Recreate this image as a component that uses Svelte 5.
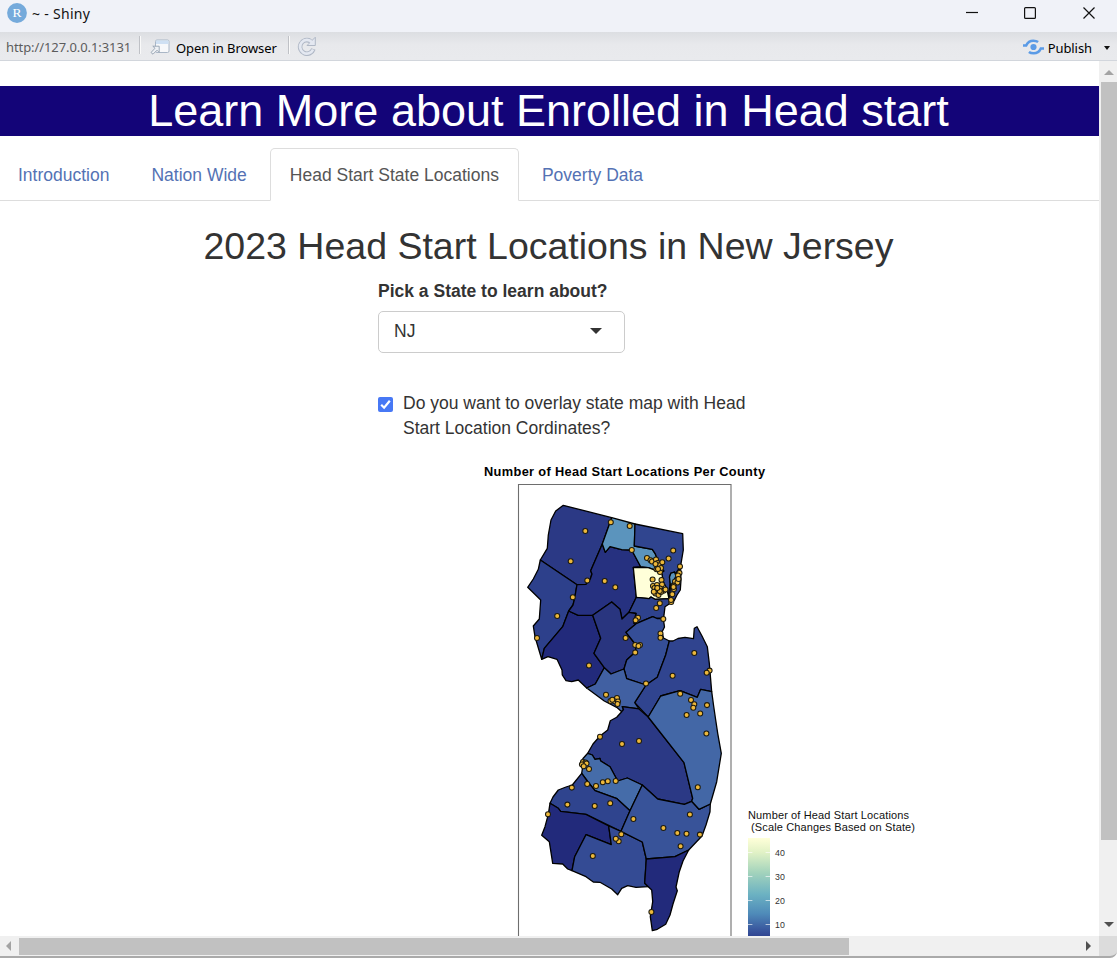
<script>
  const tabs = ['Introduction', 'Nation Wide', 'Head Start State Locations', 'Poverty Data'];
  let active = $state(2);
  let overlay = $state(true);

  const counties = [
    { name: 'Sussex', fill: '#2b3985', d: '540.3,560 547.3,548.3 548.3,535 551,520 555.7,511 563.3,505.3 611.7,517.7 602.3,544 590.7,570.7 592,574 590.3,579 586,584.3 577,584.7' },
    { name: 'Warren', fill: '#2d408b', d: '540.3,560 538.3,569.3 533.3,579 527.7,587.3 540.7,600 539.3,619 533.3,626 535,636.7 541.7,659.3 544.3,648.3 562.7,626.7 568.7,611 573,605 574.5,599 577,584.7' },
    { name: 'Hunterdon', fill: '#222a7b', d: '568.7,611 578.3,615.3 592.7,615.3 600.7,638.3 594,653.3 604.3,667.7 595.3,684 586.7,688 578.3,680 571.7,681.7 566,680.7 562.3,675 562,670 557,659.3 548,656.7 541.7,659.3 544.3,648.3 562.7,626.7' },
    { name: 'Morris', fill: '#263180', d: '602.3,544 605.3,552.3 610,546.7 621.7,549.7 631.7,550 640.7,566.7 633.3,567.3 636.3,597.3 629,612.3 622,619 620,609.3 611.7,602 592.7,615.3 578.3,615.3 568.7,611 573,605 574.5,599 577,584.7 586,584.3 590.3,579 592,574 590.7,570.7' },
    { name: 'Passaic', fill: '#5b94bd', d: '611.7,517.7 635,524 634.3,546 652.3,549.3 655,553.3 659,563 664,571 661.7,572.7 648.3,567.7 640.7,566.7 631.7,550 621.7,549.7 610,546.7 605.3,552.3 602.3,544' },
    { name: 'Bergen', fill: '#30458f', d: '635,524 682.7,533.7 683.3,550 680.5,566.7 676,573 670,585 668,598 664,588 661.7,572.7 664,571 659,563 655,553.3 652.3,549.3 634.3,546' },
    { name: 'Essex', fill: '#ffffd9', d: '633.3,567.3 648.3,567.7 661.7,572.7 663.3,581.7 666.7,588.3 669,598.7 655,599.3 651,597 649,598.7 636.3,597.3' },
    { name: 'Hudson', fill: '#30458f', d: '680.5,566.7 681,580 680.3,590 677,595 674,601 671,602.7 669,598.7 670.5,587 669.5,577 671,573 674.5,572 676,576' },
    { name: 'Hudson West', fill: '#5b94bd', d: '670.5,586 669.5,577 671,573 674.5,572 676,576 673,582' },
    { name: 'Union', fill: '#2e428d', d: '636.3,597.3 649,598.7 651,597 655,599.3 669,598.7 671,602.7 665,606.7 664,615 663.3,618.3 657,618.5 652.7,616.7 636.7,623.3 633.5,623 636,613.5 629,612.3' },
    { name: 'Somerset', fill: '#29357f', d: '592.7,615.3 611.7,602 620,609.3 622,619 629,612.3 636,613.5 633.5,623 636.7,623.3 626,632.3 636,645 635.7,651.7 626.7,660 624,669 611,674 604.3,667.7 594,653.3 600.7,638.3' },
    { name: 'Middlesex', fill: '#354e97', d: '626,632.3 636.7,623.3 652.7,616.7 657,618.5 663.3,618.3 664.5,627 662,632 663.5,638 669.3,641 665.7,655 657.3,677.3 646,685 626.7,678.7 624,669 626.7,660 635.7,651.7 636,645' },
    { name: 'Monmouth', fill: '#30448f', d: '669.3,641 673,641 678,638.5 685,637.3 693.5,638.7 694.3,628.3 697,626.7 702,636 707.3,646.7 709.3,663.3 711.7,691.7 700.7,689.3 697.3,697.3 680,690.7 660.7,696 648.2,717 634.7,702.7 646,685 657.3,677.3 665.7,655' },
    { name: 'Mercer', fill: '#4160a2', d: '604.3,667.7 611,674 624,669 626.7,678.7 646,685 634.7,702.7 639,708.9 622.3,706.7 623.5,709.5 621.7,711.7 616.7,707.3 604.3,701 586.7,688 595.3,684' },
    { name: 'Burlington', fill: '#2b3985', d: '621.7,711.7 623.5,709.5 622.3,706.7 639,708.9 648.2,717 684,762.7 692.7,798.3 691.7,801.3 684.3,804.3 657.7,799 642.3,785 627.3,778 617.7,781 610,766.7 600.7,761 600,758.5 595,759.3 592.3,755 587.7,753.3 593,744 600,736 607.7,730 610.3,720.7 616.7,717.3' },
    { name: 'Camden', fill: '#456ca9', d: '587.7,753.3 592.3,755 595,759.3 600,758.5 600.7,761 610,766.7 617.7,781 627.3,778 642.3,785 630,810.7 617,798.7 595,790.7 588,782 581.7,773.3 582.5,768 579.5,764 583,758.5' },
    { name: 'Gloucester', fill: '#2f448e', d: '581.7,773.3 572.3,785 566,787 558.3,790 553,797 550,803.3 558.3,808.3 560.7,811.3 586,814.3 621,831.3 630,810.7 617,798.7 595,790.7 588,782' },
    { name: 'Salem', fill: '#222a7b', d: '550,803.3 548.3,814.3 545,826.7 541.7,835.3 549.3,841.7 552.7,863.3 562.7,864 567.7,869 572,870.7 574.7,856.7 586,834.7 611.3,844.7 608.7,826 586,814.3 560.7,811.3 558.3,808.3' },
    { name: 'Cumberland', fill: '#344b94', d: '572,870.7 586,876.7 593.3,882 600,882.3 611.7,889 617.7,894.7 621.7,888.3 627.7,885.7 636,887.3 648.3,886.7 644.7,883.3 646.3,859 642.3,842 621,831.3 608.7,826 611.3,844.7 586,834.7 574.7,856.7' },
    { name: 'Atlantic', fill: '#385399', d: '642.3,785 657.7,799 684.3,804.3 691.7,801.3 699,809.3 710.3,804 710,811.7 706,825 702,836 688.7,850 675,856.7 646.3,859 642.3,842 621,831.3 630,810.7' },
    { name: 'Ocean', fill: '#4367a6', d: '711.7,691.7 713.5,705 715.7,720 717.7,733.3 721.3,753.3 716.7,781.7 710.3,804 699,809.3 691.7,801.3 692.7,798.3 684,762.7 648.2,717 660.7,696 680,690.7 697.3,697.3 700.7,689.3' },
    { name: 'Cape May', fill: '#222a7b', d: '688.7,850 683,861 679.3,871.7 677.5,880 676,887 677.3,890.7 673,904 670,915 665.7,924.3 657.3,929.3 652.3,930.7 650.3,916.7 652.7,901.7 651.7,890 648.3,886.7 644.7,883.3 646.3,859 675,856.7' }
  ];

  const sites = [
    [585.3, 531], [570.7, 561.3], [610.8, 522.3], [629.7, 526], [587.3, 580.5], [604.7, 581], [615.3, 587.2], [572.8, 597.2],
    [557.2, 616], [537, 638], [589, 665.5], [631.8, 550], [673.2, 550.5], [668.6, 558.4], [647, 558], [650.5, 560.2], [652, 561.5],
    [656, 559.5], [657.5, 563], [660, 565], [662.3, 562.3], [655.5, 564], [656.5, 569.3], [660, 572], [661, 568], [658, 569],
    [680, 566.5], [679.5, 573], [678, 575.5], [675, 581.5], [677.5, 582.5], [673.7, 585.6], [678.5, 579], [674, 589], [672.3, 594.2], [671.2, 602],
    [652.6, 579.5], [661.5, 580], [662, 584.5], [653, 586], [657, 585], [654.5, 588], [660, 588.5], [663.5, 590.7], [656.5, 590.5],
    [655.5, 593.5], [658.5, 595], [661, 592], [665.5, 589.5], [653.8, 591.8], [659.8, 591], [657.3, 588], [671, 600], [673.5, 587],
    [659.8, 603.3], [656.2, 608], [638, 617.8], [635.6, 620.3], [663.3, 619], [625.6, 638], [660.5, 633.5], [660.5, 637.8],
    [635.2, 645], [640, 645], [638.5, 646], [635.2, 652.5], [694.3, 653], [672.6, 675.8], [709.6, 670.6], [706.7, 672.7],
    [646, 683.4], [680.2, 693.8], [691, 700], [694.3, 704.3], [693.3, 707.8], [707, 705.1], [686.6, 715], [700.2, 713.5],
    [606, 694.8], [617, 698], [610.5, 701], [615, 701.5], [618, 701.5], [617.5, 704], [612.3, 699.8], [600, 736.8],
    [622, 744], [639, 741], [706.4, 733.5], [697.8, 787.3], [583, 762], [585.5, 762.5], [582, 764.5], [586.5, 763.5], [583.7, 766.3],
    [589, 769], [587.2, 784], [571.8, 787.6], [596, 786], [602.8, 782.2], [607.8, 781.3], [615.7, 781], [567.4, 804.6],
    [594.7, 806], [610.2, 803.2], [548, 814.3], [633.4, 819], [621.3, 834.3], [618.7, 841.3], [615.8, 838.7], [592.8, 856],
    [663.4, 828], [689.9, 814.4], [677.3, 833], [686.5, 833.7], [699.9, 834.6], [680.6, 846.2], [651.4, 912]
  ];

  const ticks = [[40, 852.5], [30, 876.5], [20, 900.5], [10, 924.5]];
</script>

<div class="window">
  <header class="titlebar">
    <svg class="logo" width="20" height="20" viewBox="0 0 20 20">
      <circle cx="10" cy="10" r="9.9" fill="#75aadb" />
      <text x="10" y="14" text-anchor="middle" fill="#fff" font-family="Liberation Serif, serif" font-size="13.5">R</text>
    </svg>
    <span class="caption">~ - Shiny</span>
    <svg class="controls" width="140" height="28" viewBox="0 0 140 28" fill="none" stroke="#111" stroke-width="1.2">
      <path d="M6 12.5h12" />
      <rect x="64.6" y="7.6" width="10.8" height="10.8" rx="1" />
      <path d="M123.5 7.5l11 11M134.5 7.5l-11 11" />
    </svg>
  </header>

  <div class="toolbar">
    <span class="url">http://127.0.0.1:3131</span>
    <i class="sep"></i>
    <svg class="open" width="20" height="16" viewBox="0 0 20 16">
      <rect x="5.5" y="1" width="13.5" height="12.5" rx="1.5" fill="#f7f8fa" stroke="#a9b6c6" />
      <path d="M6 1.5h12.5v3.5H6z" fill="#cfe0f3" />
      <path d="M1 13.5L5 9.3 2.8 7.2H9.2V13.4L7 11.2 3 15.2z" fill="#eef1f5" stroke="#94a0b0" stroke-width=".9" />
    </svg>
    <span class="label">Open in Browser</span>
    <i class="sep two"></i>
    <svg class="reload" width="20" height="20" viewBox="0 0 20 20">
      <path d="M13.6 5.2A6.8 6.8 0 1 0 16.4 13" fill="none" stroke="#b0b8c6" stroke-width="4.6" />
      <path d="M18.3 1.2v8.3H10l3-3z" fill="#e4e8f1" stroke="#b0b8c6" />
      <path d="M15 6.3A6.8 6.8 0 1 0 16.1 13.5" fill="none" stroke="#e4e8f1" stroke-width="2.7" />
    </svg>
    <svg class="pub" width="21" height="16" viewBox="0 0 21 16" fill="none" stroke="#5b9be6" stroke-width="2.5">
      <circle cx="10.5" cy="8" r="3.1" fill="#5b9be6" stroke="none" />
      <path d="M0 6.4h3.2C4.7 3.2 7.2 1.7 10.3 1.7c2 0 3.5.4 4.8 1.4" />
      <path d="M21 9.6h-3.2c-1.5 3.2-4 4.7-7.1 4.7-2 0-3.5-.4-4.8-1.4" />
    </svg>
    <span class="label">Publish</span>
    <i class="drop"></i>
  </div>

  <div class="view">
    <main class="page">
      <h1>Learn More about Enrolled in Head start</h1>
      <nav>
        {#each tabs as tab, i}
          <button class:active={active === i} onclick={() => (active = i)}>{tab}</button>
        {/each}
      </nav>
      <h2>2023 Head Start Locations in New Jersey</h2>
      <section class="form">
        <div class="field">Pick a State to learn about?</div>
        <div class="select"><span>NJ</span><i></i></div>
        <label class="check">
          <input type="checkbox" bind:checked={overlay} />
          <span class="box" class:on={overlay}>
            <svg width="15" height="15" viewBox="0 0 15 15"><path d="M3.2 7.8l2.9 2.9 5.7-7" fill="none" stroke="#fff" stroke-width="2.2" /></svg>
          </span>
          <span class="question">Do you want to overlay state map with Head Start Location Cordinates?</span>
        </label>
      </section>
      <svg class="plot" width="560" height="486" viewBox="378 450 560 486">
        <defs>
          <linearGradient id="scale" x1="0" y1="838" x2="0" y2="946" gradientUnits="userSpaceOnUse">
            <stop offset="0" stop-color="#ffffd9" />
            <stop offset=".13" stop-color="#e2f2c6" />
            <stop offset=".32" stop-color="#a3d3bc" />
            <stop offset=".52" stop-color="#6cb2c2" />
            <stop offset=".7" stop-color="#4f8bb9" />
            <stop offset=".87" stop-color="#36509a" />
            <stop offset="1" stop-color="#222a7b" />
          </linearGradient>
        </defs>
        <text x="484" y="475.6" class="ptitle" textLength="281">Number of Head Start Locations Per County</text>
        <path d="M518.5 940V484.5H731V940" fill="none" stroke="#6e6e6e" stroke-width="1.1" />
        <g stroke="#000" stroke-width="1.3" stroke-linejoin="round">
          {#each counties as c (c.name)}
            <polygon points={c.d} fill={c.fill} />
          {/each}
        </g>
        {#if overlay}
          <g fill="#edb83b" stroke="#1c1a10" stroke-width="1.05">
            {#each sites as [x, y]}
              <circle cx={x} cy={y} r="2.5" />
            {/each}
          </g>
        {/if}
        <text x="748" y="819" class="ltitle" textLength="161">Number of Head Start Locations</text>
        <text x="751" y="831" class="ltitle" textLength="164">(Scale Changes Based on State)</text>
        <rect x="748" y="838" width="22" height="108" fill="url(#scale)" />
        {#each ticks as [n, y]}
          <path d="M748 {y}h4.4M765.6 {y}h4.4" stroke="#fff" stroke-opacity=".7" stroke-width=".9" />
          <text x="775" y={y + 3.4} class="tick" textLength="10">{n}</text>
        {/each}
      </svg>
    </main>
    <div class="vbar"><i class="up"></i><i class="thumb"></i><i class="down"></i></div>
    <div class="hbar"><i class="left"></i><i class="thumb"></i><i class="right"></i></div>
    <div class="corner"></div>
  </div>
</div>

<style>
  :global(body) { margin: 0; overflow: hidden; background: #f0f0f0; }
  .window { width: 1117px; height: 958px; display: flex; flex-direction: column; overflow: hidden; font-family: "Liberation Sans", Arial, sans-serif; color: #333; }
  .titlebar { height: 32px; flex: none; display: flex; background: #f0f2f8; box-sizing: border-box; padding: 3px 17px 0 7px; font-family: "Noto Sans", sans-serif; color: #111; }
  .caption { font-size: 14px; line-height: 21px; margin-left: 5px; letter-spacing: .3px; }
  .controls { margin: -3px 0 0 auto; }
  .toolbar { height: 29px; flex: none; box-sizing: border-box; border-bottom: 1px solid #d2d6dc; display: flex; align-items: center; background: linear-gradient(#dcdee2, #e8e9ec 45%, #e9eaed); font-family: "Noto Sans", sans-serif; font-size: 13px; color: #000; white-space: nowrap; padding-left: 6px; }
  .url { width: 133px; color: #5c5c5c; letter-spacing: -.08px; padding-top: 1px; }
  .sep { width: 1px; height: 18px; background: #bfc1c6; border-right: 1px solid #fafafa; margin-bottom: 2px; }
  .open { margin: 2px 6px 0 9px; }
  .label { letter-spacing: -.08px; padding-top: 3px; }
  .two { margin-left: 11px; }
  .reload { margin-left: 7px; margin-bottom: 1px; }
  .pub { margin: 2px 4px 0 auto; }
  .drop { border: 3px solid transparent; border-top: 4px solid #111; border-bottom: 0; margin: 3px 7px 0 12px; }

  .view { flex: 1; min-height: 0; display: grid; grid-template: 875px 22px / 1099px 18px; background: #fff; }
  .page { display: flex; flex-direction: column; overflow: hidden; padding-top: 25px; box-sizing: border-box; background: #fff; }
  h1 { margin: 0; flex: none; height: 50px; line-height: 50px; background: #130478; color: #fff; text-align: center; font-weight: 400; font-size: 45px; white-space: nowrap; padding-right: 2px; }
  nav { margin-top: 12px; flex: none; display: flex; height: 53px; box-sizing: border-box; border-bottom: 1px solid #ddd; }
  nav button { all: unset; box-sizing: border-box; cursor: pointer; height: 53px; padding: 0 19px; margin-right: 3px; font-size: 17.5px; line-height: 50px; color: #5472b4; white-space: nowrap; border: 1px solid transparent; border-width: 0 1px; }
  nav button:first-child { padding: 0 18px 0 17px; }
  nav button.active { color: #555; background: #fff; border: 1px solid #ddd; border-bottom-color: #fff; border-radius: 5px 5px 0 0; line-height: 48px; }
  h2 { margin: 22px 0 0; flex: none; text-align: center; font-size: 37.5px; font-weight: 400; line-height: 46px; white-space: nowrap; padding-right: 2px; }
  .form { flex: none; height: 181px; padding: 11px 0 0 378px; font-size: 17.5px; line-height: 25px; box-sizing: border-box; }
  .field { font-weight: 700; height: 31px; line-height: 23px; }
  .select { width: 247px; height: 42px; box-sizing: border-box; border: 1px solid #ccc; border-radius: 5px; display: flex; align-items: center; justify-content: space-between; padding: 0 22px 2px 15px; }
  .select i { border: 6px solid transparent; border-top: 6px solid #333; border-bottom: 0; }
  .check { margin-top: 37px; display: flex; gap: 10px; width: 375px; }
  .check input { position: absolute; opacity: 0; }
  .question { padding-top: 1px; }
  .box { flex: none; width: 15px; height: 15px; margin-top: 7px; border-radius: 2px; display: flex; background: #bbb; }
  .box.on { background: #4778f5; }
  .plot { flex: none; margin-left: 378px; display: block; }
  .ptitle { font-size: 12.8px; font-weight: 700; fill: #000; }
  .ltitle { font-size: 11px; fill: #111; }
  .tick { font-size: 8.8px; fill: #333; }

  .vbar, .hbar { background: #f0f0f0; display: flex; align-items: center; }
  .vbar { flex-direction: column; }
  .vbar .thumb { width: 16px; height: 758px; margin: 7px 0 0 2px; background: #c1c1c1; }
  .up { border: 5px solid transparent; border-top: 0; border-bottom-color: #a3a3a3; margin: 9px 0 0 2px; }
  .down { border: 5px solid transparent; border-bottom: 0; border-top-color: #505050; margin: auto 0 9px 2px; }
  .hbar { border-bottom: 2px solid #aaa; box-sizing: border-box; }
  .hbar .thumb { width: 830px; height: 17px; margin-left: 8px; background: #c1c1c1; }
  .left { border: 5px solid transparent; border-left: 0; border-right-color: #a3a3a3; margin-left: 6px; }
  .right { border: 5px solid transparent; border-right: 0; border-left-color: #505050; margin: 0 8px 0 auto; }
  .corner { background: #dcdcdc; border-bottom: 2px solid #aaa; border-radius: 0 0 7px 0; box-sizing: border-box; }
</style>
